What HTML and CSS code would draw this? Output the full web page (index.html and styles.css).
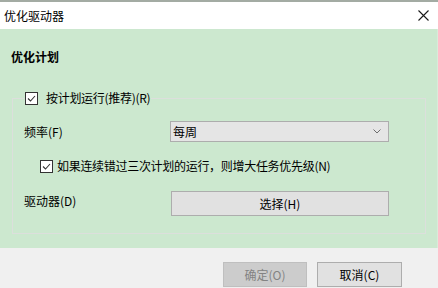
FILE: index.html
```html
<!DOCTYPE html>
<html lang="zh-CN">
<head>
    <meta charset="UTF-8">
    <meta name="viewport" content="width=device-width, initial-scale=1.0">
    <link rel="stylesheet" href="styles.css">
    <title>优化驱动器</title>
</head>
<body>

<div class="window">
    <div class="titlebar">
        <span class="title">优化驱动器</span>
        <span class="close">
            <svg width="11" height="11" viewBox="0 0 11 11"><path d="M0.5 0.5 L10.5 10.5 M10.5 0.5 L0.5 10.5" stroke="#1a1a1a" stroke-width="1.1" fill="none"/></svg>
        </span>
    </div>

    <div class="content">
        <div class="heading">优化计划</div>

        <fieldset class="group">
            <legend class="check-row">
                <span class="checkbox">
                    <svg width="11" height="11" viewBox="0 0 11 11"><path d="M2 5.5 L4.5 8 L9 3" stroke="#333" stroke-width="1.1" fill="none"/></svg>
                </span>
                <span class="check-text">按计划运行(推荐)(R)</span>
            </legend>

            <div class="form-row">
                <span class="label">频率(F)</span>
                <div class="select">
                    <span>每周</span>
                    <svg width="8" height="5" viewBox="0 0 8 5"><path d="M0.5 0.5 L4 4 L7.5 0.5" stroke="#6d6d6d" stroke-width="1" fill="none"/></svg>
                </div>
            </div>

            <div class="check-row sub">
                <span class="checkbox">
                    <svg width="11" height="11" viewBox="0 0 11 11"><path d="M2 5.5 L4.5 8 L9 3" stroke="#333" stroke-width="1.1" fill="none"/></svg>
                </span>
                <span class="check-text">如果连续错过三次计划的运行，则增大任务优先级(N)</span>
            </div>

            <div class="form-row drives">
                <span class="label">驱动器(D)</span>
                <button class="btn wide">选择(H)</button>
            </div>
        </fieldset>
    </div>

    <div class="footer">
        <button class="btn disabled">确定(O)</button>
        <button class="btn">取消(C)</button>
    </div>
</div>

</body>
</html>
```

FILE: styles.css
```css
body {
    margin: 0;
    font-family: "Noto Sans CJK SC", "Noto Sans", sans-serif;
    font-size: 12px;
    color: #000;
    background: #f0f0f0;
}

.window {
    width: 438px;
    height: 288px;
    display: flex;
    flex-direction: column;
    overflow: hidden;
}

.titlebar {
    height: 27px;
    border-top: 2px solid #a3aba3;
    background: #fff;
    display: flex;
    align-items: center;
    justify-content: space-between;
    padding: 0 9px 0 4px;
}

.title {
    line-height: 16px;
}

.close {
    display: flex;
}

.content {
    height: 219px;
    box-sizing: border-box;
    background: #cce8cf;
    padding: 20px 11px 0 12px;
    border-right: 1px solid #d8ecda;
}

.heading {
    font-weight: bold;
    line-height: 16px;
    margin-left: -1px;
}

.group {
    margin: 25px 0 0 0;
    padding: 15px 11px 17px 11px;
    border: 1px solid #dcdfdc;
    min-width: 0;
}

.group legend {
    padding: 0 1px;
}

.check-row {
    display: flex;
    align-items: center;
    line-height: 16px;
    height: 16px;
}

.check-text {
    letter-spacing: -0.3px;
}

.checkbox {
    width: 11px;
    height: 11px;
    border: 1px solid #333;
    background: #fff;
    display: flex;
    margin-right: 8px;
}

.check-row.sub {
    margin: 16px 0 0 16px;
}

.check-row.sub .checkbox {
    margin-right: 4px;
}

.form-row {
    display: grid;
    grid-template-columns: 146px 219px;
    align-items: center;
}

.label {
    line-height: 16px;
}

.select {
    height: 21px;
    box-sizing: border-box;
    border: 1px solid #adadad;
    background: #e5e5e5;
    display: flex;
    align-items: center;
    justify-content: space-between;
    padding: 0 7px 0 2px;
}

.drives {
    margin-top: 17px;
    align-items: start;
}

.drives .label {
    padding-top: 2px;
}

.btn {
    font-family: inherit;
    font-size: 12px;
    height: 25px;
    width: 85px;
    border: 1px solid #adadad;
    background: #e1e1e1;
    color: #000;
    padding: 0;
    margin: 0;
}

.btn.wide {
    width: 218px;
    margin-left: 1px;
}

.btn.disabled {
    background: #cccccc;
    border-color: #bfbfbf;
    color: #838383;
    width: 84px;
}

.footer {
    flex: 1;
    display: flex;
    justify-content: flex-end;
    gap: 10px;
    padding: 14px 36px 0 0;
}
```
